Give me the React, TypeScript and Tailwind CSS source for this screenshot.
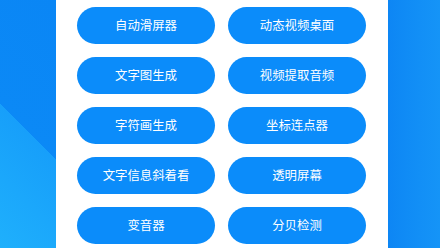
const tools = [
  '自动滑屏器',
  '动态视频桌面',
  '文字图生成',
  '视频提取音频',
  '字符画生成',
  '坐标连点器',
  '文字信息斜着看',
  '透明屏幕',
  '变音器',
  '分贝检测',
];

export default function App() {
  return (
    <div className="flex h-[248px] w-[440px] overflow-hidden font-['Noto_Sans_CJK_SC','Noto_Sans',sans-serif]">
      <div className="w-[56px] shrink-0 bg-[linear-gradient(225deg,#0a86f5_0%,#0b89f6_52.6%,#179ffa_52.6%,#1fb0fc_100%)]" />
      <div className="w-[332px] shrink-0 bg-white pl-[21px] pr-[22px] pt-[7px]">
        <div className="grid grid-cols-2 gap-x-[13px] gap-y-[13px]">
          {tools.map(t => (
            <button
              key={t}
              type="button"
              className="flex h-[37px] w-[138px] items-center justify-center rounded-full bg-[#0b8cfa] text-[12.4px] leading-none text-white"
            >
              {t}
            </button>
          ))}
        </div>
      </div>
      <div className="flex-1 bg-[linear-gradient(90deg,#0d86f4_0%,#128ff6_60%,#1594f7_100%)]" />
    </div>
  );
}
